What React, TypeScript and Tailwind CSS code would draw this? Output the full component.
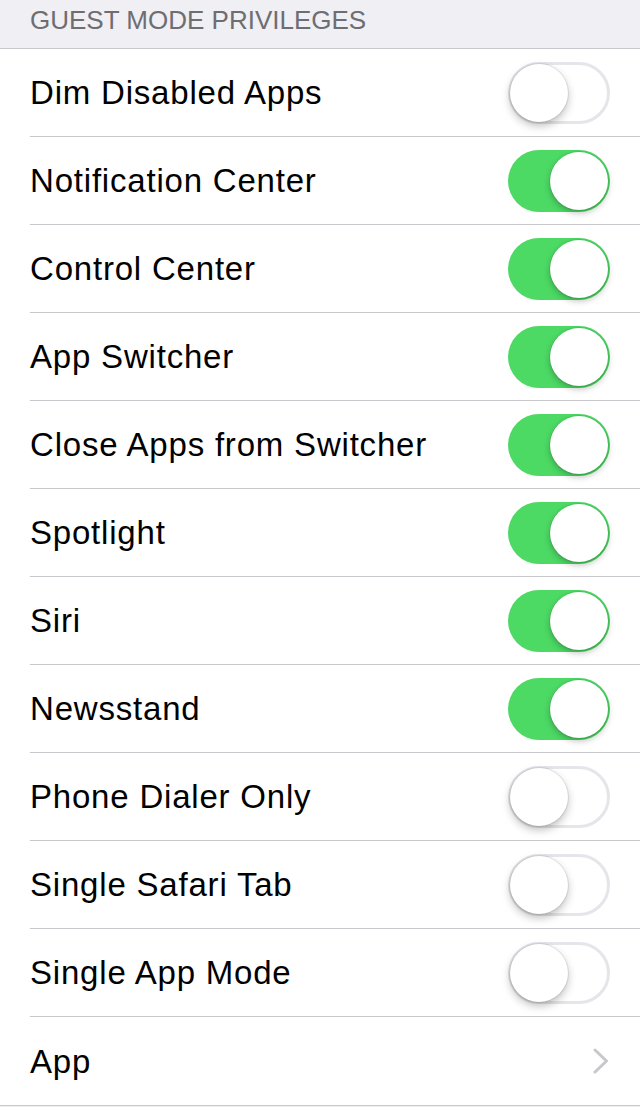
type Row = { label: string; on?: boolean; link?: boolean }

const ROWS: Row[] = [
  { label: "Dim Disabled Apps", on: false },
  { label: "Notification Center", on: true },
  { label: "Control Center", on: true },
  { label: "App Switcher", on: true },
  { label: "Close Apps from Switcher", on: true },
  { label: "Spotlight", on: true },
  { label: "Siri", on: true },
  { label: "Newsstand", on: true },
  { label: "Phone Dialer Only", on: false },
  { label: "Single Safari Tab", on: false },
  { label: "Single App Mode", on: false },
  { label: "App", link: true },
]

function Toggle({ on }: { on: boolean }) {
  if (on) {
    return (
      <div className="relative h-[62px] w-[102px] rounded-full bg-[#4cd964]">
        <div className="absolute right-[2px] top-[2px] h-[58px] w-[58px] rounded-full bg-white shadow-[0_3px_6px_rgba(0,0,0,0.25),0_0_0_1px_rgba(0,0,0,0.06)]" />
      </div>
    )
  }
  return (
    <div className="relative h-[62px] w-[102px] rounded-full border-[3px] border-[#e5e5ea] bg-white">
      <div className="absolute left-[-1px] top-[-1px] h-[58px] w-[58px] rounded-full bg-white shadow-[0_4px_8px_rgba(0,0,0,0.25),0_0_0_1px_rgba(0,0,0,0.08)]" />
    </div>
  )
}

const Chevron = () => (
  <svg width="16" height="26" viewBox="0 0 16 26" fill="none" className="mr-[1px]">
    <path d="M2 2 L13.5 13 L2 24" stroke="#c7c7cc" strokeWidth="3" strokeLinecap="round" strokeLinejoin="round" />
  </svg>
)

export default function App() {
  return (
    <div
      className="min-h-[1107px] w-[640px] bg-[#efeff4]"
      style={{ fontFamily: '"Liberation Sans", Arial, sans-serif' }}
    >
      <div className="flex h-[49px] items-start border-b border-[#c8c7cc] pl-[30px] pt-[5px] text-[26px] leading-[30px] text-[#6d6d72]">
        GUEST MODE PRIVILEGES
      </div>
      <div className="bg-white">
        {ROWS.map((r, i) => {
          const last = i === ROWS.length - 1
          return (
            <div key={r.label} className={last ? "border-b border-[#c8c7cc]" : ""}>
              <div className="ml-[30px]">
                <div
                  className={
                    "flex h-[88px] items-center justify-between pr-[30px] " +
                    (last ? "" : "border-b border-[#c8c7cc]")
                  }
                >
                  <span className="text-[33px] leading-none tracking-[0.8px] text-black">{r.label}</span>
                  {r.link ? <Chevron /> : <Toggle on={!!r.on} />}
                </div>
              </div>
            </div>
          )
        })}
      </div>
    </div>
  )
}
